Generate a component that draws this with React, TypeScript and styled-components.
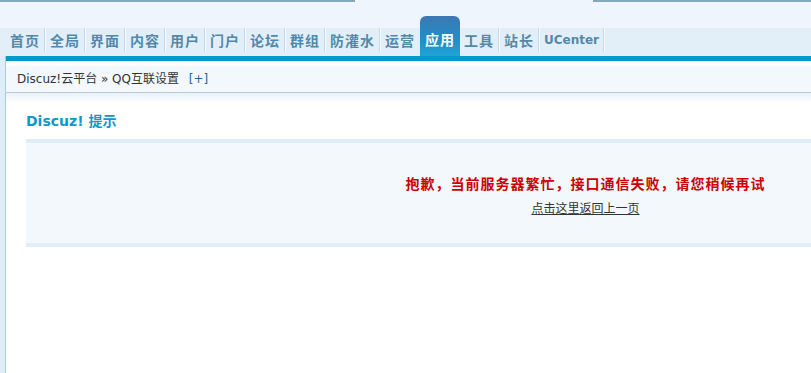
import React from 'react';
import styled, {createGlobalStyle} from 'styled-components';

const navItems = ['首页', '全局', '界面', '内容', '用户', '门户', '论坛', '群组', '防灌水', '运营', '应用', '工具', '站长', 'UCenter'];
const ACTIVE = '应用';

const GlobalStyle = createGlobalStyle`
    html, body {
        margin: 0;
        padding: 0;
        overflow: hidden;
        background: #fff;
    }
    body {
        font-family: "DejaVu Sans", "Noto Sans CJK SC", sans-serif;
        font-size: 12px;
        color: #333;
    }
`;

const App: React.FC = () => {
    return (
        <>
            <GlobalStyle/>
            <Page>
                <Header>
                    <NavList>
                        {navItems.map((name, i) => (
                            <NavItem
                                key={name}
                                $active={name === ACTIVE}
                                $beforeActive={navItems[i + 1] === ACTIVE}
                                $latin={/^[A-Za-z]+$/.test(name)}
                            >
                                {name}
                            </NavItem>
                        ))}
                    </NavList>
                </Header>
                <Body>
                    <SideStrip/>
                    <Main>
                        <BlueBar/>
                        <Breadcrumb>
                            Discuz!云平台 &raquo; QQ互联设置 <AddLink>[+]</AddLink>
                        </Breadcrumb>
                        <Shade/>
                        <Content>
                            <Title>Discuz! 提示</Title>
                            <InfoBox>
                                <ErrorText>抱歉，当前服务器繁忙，接口通信失败，请您稍候再试</ErrorText>
                                <BackLink href="#">点击这里返回上一页</BackLink>
                            </InfoBox>
                        </Content>
                    </Main>
                </Body>
            </Page>
        </>
    );
};

export default App;

const Page = styled.div`
    width: 811px;
    height: 373px;
    display: flex;
    flex-direction: column;
    overflow: hidden;
`;

const Header = styled.div`
    height: 56px;
    display: flex;
    align-items: flex-end;
    background:
        linear-gradient(to right, #86a8bf 0 355px, transparent 355px 593px, #86a8bf 593px) top / 100% 2px no-repeat,
        linear-gradient(to bottom, #eef5fc 0 28px, #e2eff9 28px 56px);
`;

const NavList = styled.ul`
    display: flex;
    align-items: flex-end;
    list-style: none;
    margin: 0;
    padding: 0 0 0 6px;
`;

const NavItem = styled.li<{ $active?: boolean; $beforeActive?: boolean; $latin?: boolean }>`
    display: flex;
    align-items: center;
    box-sizing: border-box;
    font-family: ${p => p.$latin ? '"DejaVu Sans", sans-serif' : '"Noto Sans CJK SC", sans-serif'};
    font-size: ${p => p.$latin ? '12px' : '14px'};
    letter-spacing: ${p => p.$latin ? '0' : '1px'};
    font-weight: 700;
    line-height: 24px;
    color: ${p => p.$active ? '#fff' : '#5488a9'};
    height: ${p => p.$active ? '40px' : '24px'};
    margin-bottom: ${p => p.$active ? '0' : '4px'};
    padding: ${p => p.$active ? '11px 5px 5px' : '0 4px 1px'};
    border-right: ${p => p.$active || p.$beforeActive ? '0' : '1px solid #c6d9e6'};
    margin-right: ${p => p.$active || p.$beforeActive ? '0' : '1px'};
    box-shadow: ${p => p.$active || p.$beforeActive ? 'none' : '1px 0 0 #f7fbfe'};
    border-radius: ${p => p.$active ? '6px 6px 0 0' : '0'};
    background: ${p => p.$active ? 'linear-gradient(to bottom, #3d78b3, #1f8fc8 60%, #22a2d6)' : 'transparent'};
    padding-right: ${p => p.$beforeActive ? '5px' : ''};
`;

const Body = styled.div`
    flex: 1;
    display: flex;
    min-height: 0;
`;

const SideStrip = styled.div`
    width: 5px;
    flex: 0 0 5px;
    background: #deedf8;
    border-right: 1px solid #adcadb;
`;

const Main = styled.div`
    flex: 1;
    display: flex;
    flex-direction: column;
    min-width: 0;
    overflow: hidden;
`;

const BlueBar = styled.div`
    height: 5px;
    background: #0099cc;
`;

const Breadcrumb = styled.div`
    height: 26px;
    line-height: 26px;
    border-top: 5px solid #fff;
    border-bottom: 1px solid #b6ccd8;
    background: #f2f8fc;
    padding-left: 11px;
    font-size: 12px;
    color: #333;
    white-space: nowrap;
`;

const AddLink = styled.span`
    color: #2a63a4;
    margin-left: 6px;
`;

const Shade = styled.div`
    height: 10px;
    background: linear-gradient(to bottom, #e7f1f8, #fff);
`;

const Content = styled.div`
    padding: 6px 0 0 20px;
    overflow: hidden;
`;

const Title = styled.h3`
    margin: 0 0 6px;
    height: 24px;
    line-height: 24px;
    font-size: 14px;
    font-weight: 700;
    color: #0a9acb;
    font-family: "DejaVu Sans", "Noto Sans CJK SC", sans-serif;
`;

const InfoBox = styled.div`
    width: 1119px;
    height: 100px;
    box-sizing: content-box;
    border-top: 4px solid #dfedf9;
    border-bottom: 4px solid #dfedf9;
    background: #f2f8fc;
    display: flex;
    flex-direction: column;
    align-items: center;
`;

const ErrorText = styled.p`
    margin: 28px 0 0;
    line-height: 24px;
    font-family: "Noto Sans CJK SC", sans-serif;
    font-size: 14px;
    font-weight: 700;
    letter-spacing: 1px;
    color: #cc0000;
`;

const BackLink = styled.a`
    margin-top: 3px;
    line-height: 20px;
    font-family: "Noto Sans CJK SC", sans-serif;
    font-size: 12px;
    color: #333;
    text-decoration: underline;
`;
